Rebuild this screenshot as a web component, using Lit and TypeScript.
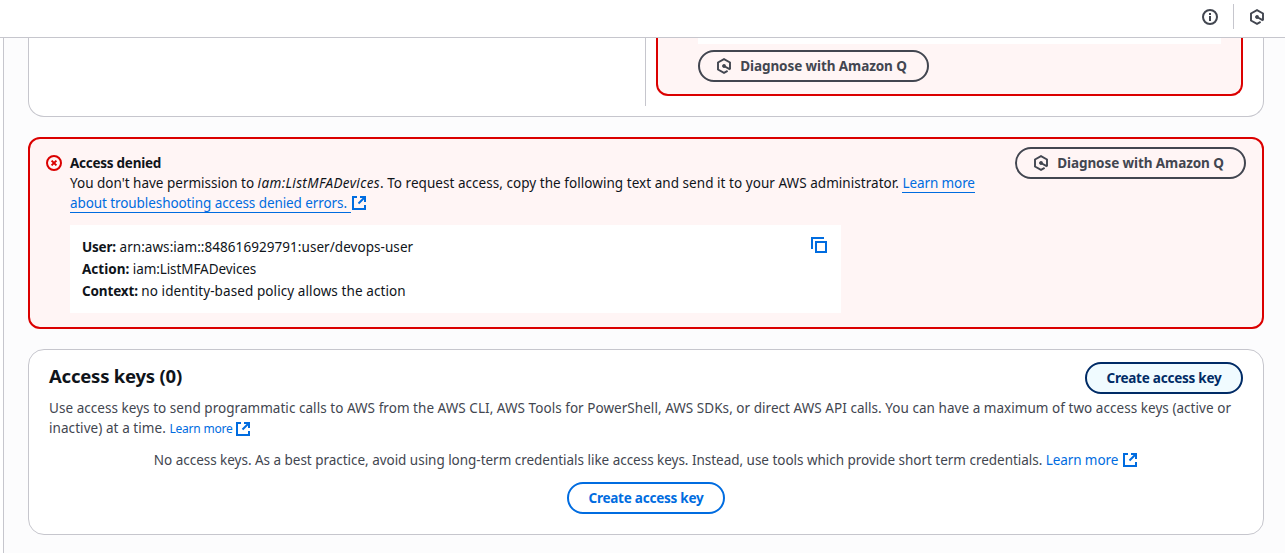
import { LitElement, html, css, svg } from 'lit';
import { customElement } from 'lit/decorators.js';

const icon = (body: unknown) => html`<svg class="icon" viewBox="0 0 16 16" width="16" height="16" fill="none" stroke="currentColor" stroke-width="2">${body}</svg>`;

const externalIcon = () => icon(svg`<path d="M9 2h5v5"/><path d="m7.5 8.5 6-6"/><path d="M14 10v4H2V2h4"/>`);
const copyIcon = () => icon(svg`<path d="M1 12V1h12"/><path d="M5 5h10v10H5z"/>`);
const infoIcon = () => icon(svg`<circle cx="8" cy="8" r="7"/><path d="M8 7v5M8 4v2"/>`);
const errorIcon = () => icon(svg`<circle cx="8" cy="8" r="7"/><path d="m5.6 5.6 4.8 4.8M10.4 5.6l-4.8 4.8"/>`);
const qIcon = () => icon(svg`<path stroke-width="1.9" d="M14 11.6V4.5L8 1.2 2 4.5v7L8 14.8l3.6-2"/><path d="m8 8 6 3.4"/><circle cx="8" cy="8" r="1.3" fill="currentColor" stroke-width="1.2"/>`);

const diagnoseButton = () => html`<button class="btn diagnose">${qIcon()}<span>Diagnose with Amazon Q</span></button>`;

@customElement('app-root')
export class AppRoot extends LitElement {
  static styles = css`
    :host {
      display: flex;
      flex-direction: column;
      height: 553px;
      overflow: hidden;
      background: #fff;
      color: #0f141a;
      font: 13.5px/20px "Noto Sans", "Open Sans", sans-serif;
      white-space: nowrap;
    }
    * { box-sizing: border-box; }
    .icon { display: block; flex: none; }
    header {
      flex: none;
      height: 38px;
      padding: 4px 20px 8px 0;
      border-bottom: 1px solid #c6c6cd;
      display: flex;
      justify-content: flex-end;
      align-items: center;
      color: #424650;
    }
    .rule { width: 1px; height: 25px; margin: 0 15px; background: #c6c6cd; }
    main {
      flex: 1;
      min-height: 0;
      margin-left: 3px;
      padding: 0 21px 18px 24px;
      border-left: 1px solid #c6c6cd;
      background: #fcfcfd;
      display: flex;
      flex-direction: column;
    }
    .card { background: #fff; border: 1px solid #c6c6cd; border-radius: 16px; flex: none; }
    .details {
      height: 79px;
      border-top: 0;
      border-radius: 0 0 16px 16px;
      display: flex;
      padding-right: 20px;
      justify-content: flex-end;
    }
    .column { height: 68px; width: 598px; border-left: 1px solid #c6c6cd; padding-left: 10px; }
    .alert { border: 2px solid #db0000; border-radius: 12px; background: #fff5f5; }
    .clipped { height: 58px; border-top: 0; border-radius: 0 0 12px 12px; padding: 0 20px 0 40px; }
    .code-end { height: 6px; margin-bottom: 6px; background: #fff; }
    .btn {
      height: 32px;
      padding: 0;
      border: 2px solid;
      border-radius: 16px;
      background: transparent;
      font: 700 13.5px/20px "Noto Sans", "Open Sans", sans-serif;
      display: flex;
      align-items: center;
      justify-content: center;
      flex: none;
    }
    .diagnose { width: 231px; padding-right: 4px; color: #424650; gap: 8px; letter-spacing: -0.09px; }
    .denied { flex: none; height: 192px; margin: 20px 0; padding: 8px 16px 0; display: flex; align-items: flex-start; }
    .denied .status { color: #db0000; margin: 8px 8px 0 0; }
    .body { width: 945px; padding-top: 6px; }
    .title { font-weight: 700; letter-spacing: -0.26px; }
    .iam { font-style: italic; letter-spacing: 0.37px; }
    .ask { letter-spacing: 0.045px; }
    a { color: #006ce0; text-decoration: none; letter-spacing: -0.1px; }
    .lined { border-bottom: 1px solid #006ce0; }
    .trouble { letter-spacing: -0.084px; padding-right: 4px; }
    .ext { display: inline-block; vertical-align: -3px; color: #006ce0; }
    .policy {
      width: 771px;
      height: 88px;
      margin-top: 12px;
      padding: 11px 14px 0 12px;
      background: #fff;
      line-height: 22px;
      display: flex;
      justify-content: space-between;
    }
    .policy .icon { color: #006ce0; margin-top: 1px; }
    .user { letter-spacing: -0.18px; }
    .arn { letter-spacing: 0.055px; }
    .action { letter-spacing: -0.08px; }
    .context { letter-spacing: -0.15px; }
    .reason { letter-spacing: 0.09px; }
    .keys { height: 186px; padding: 12px 20px 0; }
    .head { display: flex; justify-content: space-between; margin-bottom: 4px; }
    h2 { margin: 0; font-size: 18.5px; line-height: 28px; letter-spacing: -0.22px; }
    .create { width: 158px; letter-spacing: -0.235px; color: #006ce0; }
    .active { color: #002b66; background: #f0fbff; }
    .muted { color: #424650; }
    .lead { letter-spacing: 0.043px; }
    .tail { letter-spacing: 0.07px; }
    .small { font-size: 12px; letter-spacing: -0.22px; }
    .second { height: 20px; }
    .second .ext { margin-left: 3px; vertical-align: -4px; }
    .empty { margin-top: 12px; display: flex; flex-direction: column; align-items: center; gap: 12px; }
    .empty .muted { height: 20px; }
    .none { letter-spacing: -0.026px; }
    .empty .ext { margin-left: 4px; }
  `;

  render() {
    return html`
      <header>${infoIcon()}<span class="rule"></span>${qIcon()}</header>
      <main>
        <section class="card details">
          <div class="column">
            <div class="alert clipped"><div class="code-end"></div>${diagnoseButton()}</div>
          </div>
        </section>
        <section class="alert denied">
          <span class="status">${errorIcon()}</span>
          <div class="body">
            <div class="title">Access denied</div>
            <div>You don't have permission to <span class="iam">iam:ListMFADevices</span><span class="ask">. To request access, copy the following text and send it to your AWS administrator. </span><a class="lined">Learn more</a></div>
            <div><a class="lined trouble">about troubleshooting access denied errors.</a><span class="ext">${externalIcon()}</span></div>
            <div class="policy">
              <div>
                <div><b class="user">User:</b> <span class="arn">arn:aws:iam::848616929791:user/devops-user</span></div>
                <div><b>Action:</b> <span class="action">iam:ListMFADevices</span></div>
                <div><b class="context">Context:</b> <span class="reason">no identity-based policy allows the action</span></div>
              </div>
              ${copyIcon()}
            </div>
          </div>
          ${diagnoseButton()}
        </section>
        <section class="card keys">
          <div class="head"><h2>Access keys (0)</h2><button class="btn create active">Create access key</button></div>
          <div class="muted lead">Use access keys to send programmatic calls to AWS from the AWS CLI, AWS Tools for PowerShell, AWS SDKs, or direct AWS API calls. You can have a maximum of two access keys (active or</div>
          <div class="muted second"><span class="tail">inactive) at a time.</span> <a class="small">Learn more</a><span class="ext">${externalIcon()}</span></div>
          <div class="empty">
            <div class="muted"><span class="none">No access keys. As a best practice, avoid using long-term credentials like access keys. Instead, use tools which provide short term credentials. </span><a>Learn more</a><span class="ext">${externalIcon()}</span></div>
            <button class="btn create">Create access key</button>
          </div>
        </section>
      </main>
    `;
  }
}
